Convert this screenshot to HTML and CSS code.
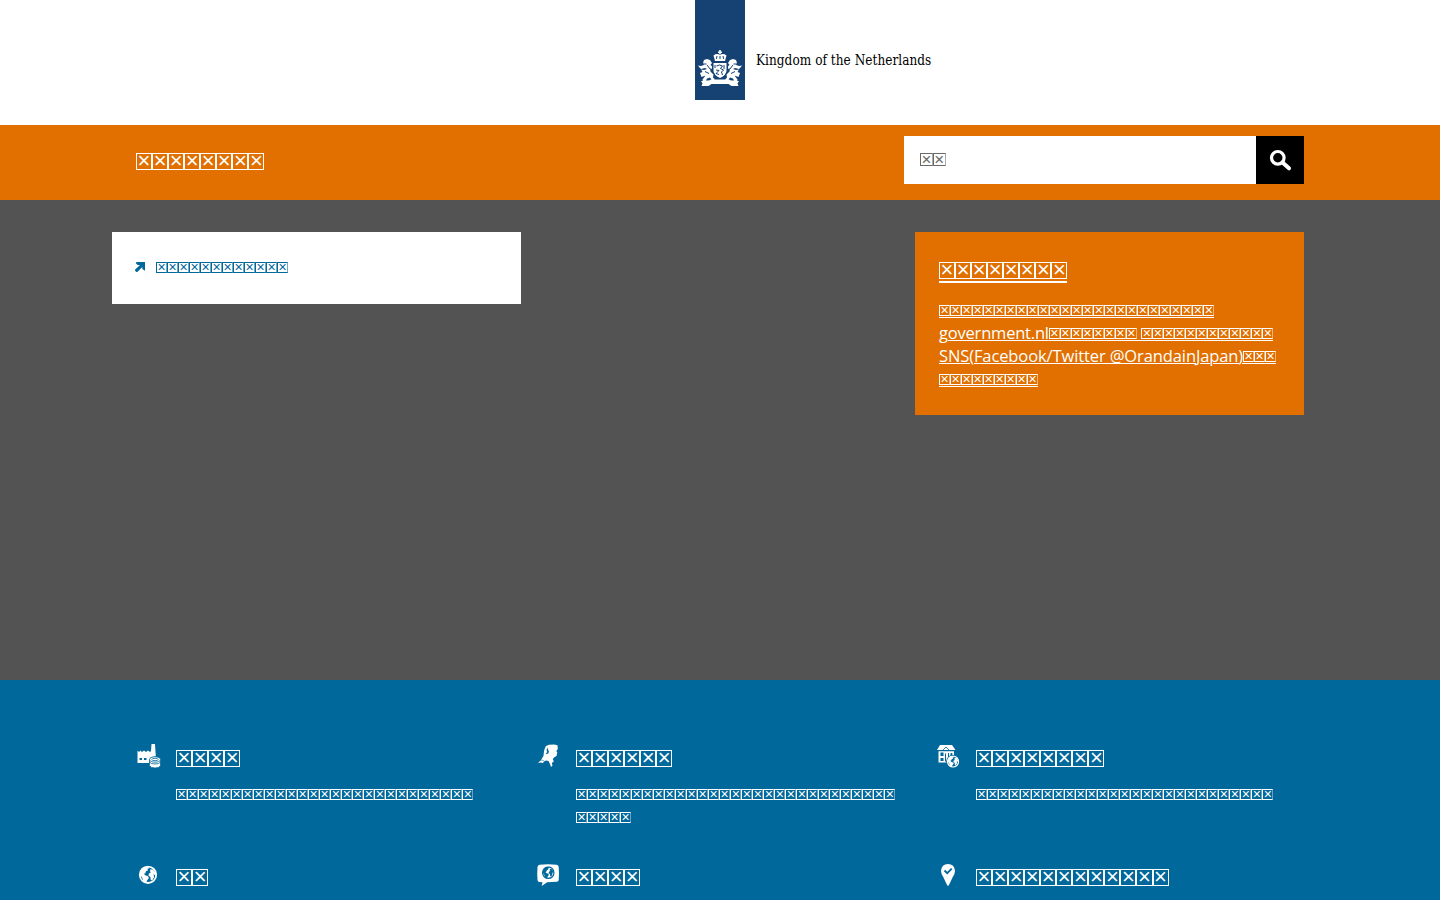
FILE: index.html
```html
<!DOCTYPE html>
<html lang="ja">
<head>
<meta charset="utf-8">
<title>Kingdom of the Netherlands</title>
<link rel="stylesheet" href="styles.css">
</head>
<body>
<svg class="defs" aria-hidden="true">
  <symbol id="globe" viewBox="0 0 20 20">
    <circle cx="10" cy="10" r="8.800" fill="none" stroke="currentColor" stroke-width="2"/>
    <path fill="currentColor" d="M2 5 5 2 10 1l1.500 2-2 .5.5 1.500-2.200 1.200L7 8.500l-1.500.3L7 10.500l3 1 1 2-2 2.500L8 19l-3-1.500-1-4L1.500 10ZM12.500 4l3 .5 3 4-1 2-1.500-1 .5 3-2 3.500-1.500-.5-.5-3.500-2-1 .5-2.500 2-1-.8-1Z"/>
  </symbol>
</svg>
<header class="brand">
  <div class="ribbon">
    <svg class="arms" viewBox="0 0 44 37">
      <g fill="#fff">
        <path d="M21.200 0h1.600v1.500H24V3h-1.200v1h-1.600V3H20V1.500h1.200Z"/>
        <path d="M15.500 5.500q3-2.500 6.500-.8 3.500-1.700 6.500.8L27 11H17Z"/>
        <path d="M15.500 13h13v7.500q0 5-6.500 7.500-6.500-2.500-6.500-7.500Z"/>
        <path id="lion" d="M6 10l3-1 3 1 2 3-1.500 2 2.500 2v2l-3-.5.5 3 3 3-.5 3 2 2-3 1-2-3-3 1-1 2h3v1.500H5l-.5-2.500 3-4-4 1.500L2 23l2.500-1L3 19.500l3 .5 3-1-2-1-4 1-1.500-1.500L0 15.500l3 .5 3-1-1-2Z"/>
        <use href="#lion" transform="matrix(-1 0 0 1 44 0)"/>
        <path d="M3 31h7l3-1.500h18l3 1.500h7l-1.500 2.500 1 2.500h-7l-3-2H13.500l-3 2h-7l1-2.500Z"/>
      </g>
      <g fill="none" stroke="#154273">
        <path stroke-width="1" d="M18.300 9l.7-3M22 9V6M25.700 9l-.7-3M4.500 14h4M39.500 14h-4M7 21.500l4 2M37 21.500l-4 2M9 15l3 4M35 15l-3 4M14.500 12v9M29.500 12v9M15 22l3 5M29 22l-3 5"/>
        <path stroke-width="1" d="M18.500 16l3-1 3 1-2 2.500 3 1.500-2 2 1 3M18 20l3 .5-3 3 3 1M26 15v4M17 15v3"/>
      </g>
    </svg>
  </div>
  <span class="brand-name">Kingdom of the Netherlands</span>
</header>
<nav class="bar">
  <div class="wrap bar-row">
    <a class="title" data-boxes>☒☒☒☒☒☒☒☒</a>
    <form class="search">
      <div class="field" data-boxes>☒☒</div>
      <button type="button" aria-label="search"><svg viewBox="0 0 24 24"><circle cx="9.800" cy="9.800" r="6.300" fill="none" stroke="#fff" stroke-width="3.200"/><path d="M14.500 14.500 21 20.300" stroke="#fff" stroke-width="4" stroke-linecap="round"/></svg></button>
    </form>
  </div>
</nav>
<main>
  <div class="wrap cards">
    <section class="link-card">
      <svg class="arrow" viewBox="0 0 10 10"><path fill="currentColor" d="M1.300 0H10v8.800L7.300 7V4.900L2.300 10H1.500L0 8.700V7.800L5 2.900H2.700L1 1.500Z"/></svg>
      <a data-boxes>☒☒☒☒☒☒☒☒☒☒☒☒</a>
    </section>
    <aside class="notice">
      <h2 class="lined" data-boxes>☒☒☒☒☒☒☒☒</h2>
      <p class="lined" data-boxes>☒☒☒☒☒☒☒☒☒☒☒☒☒☒☒☒☒☒☒☒☒☒☒☒☒<br><span class="gov">government.nl</span>☒☒☒☒☒☒☒☒ ☒☒☒☒☒☒☒☒☒☒☒☒<br><span class="sns">SNS(Facebook/Twitter @OrandainJapan)</span>☒☒☒<br>☒☒☒☒☒☒☒☒☒</p>
    </aside>
  </div>
</main>
<footer>
  <div class="wrap topics">
    <article>
      <svg viewBox="0 0 24 24"><path fill="currentColor" d="M.5 6.500 2 8l1.500-1.500L5 8l2-1.500L9 8l2-1.500L13 8l1-1L14.500 0h3.500l.8 12.500q-6 0-6.300 3V19H.5Z"/><path d="M2.500 15h2.500M7 15h2.500" stroke="#01689b" stroke-width="1.800"/><g fill="currentColor" stroke="#01689b" stroke-width=".8"><path d="M12.500 15v6.500q1 2.500 5.500 2.500t5.500-2.500V15"/><path fill="none" d="M12.500 18q1 2 5.500 2t5.500-2"/><ellipse cx="18" cy="15.500" rx="5.500" ry="2.700"/><ellipse cx="18" cy="15.500" rx="3.200" ry="1.200"/></g></svg>
      <div><h2 data-boxes>☒☒☒☒</h2><p data-boxes>☒☒☒☒☒☒☒☒☒☒☒☒☒☒☒☒☒☒☒☒☒☒☒☒☒☒☒</p></div>
    </article>
    <article>
      <svg viewBox="0 0 24 24"><path fill="currentColor" d="M9 2l3-1.200 5-.3 3.500.8.300 3.700-1.500 2 1 1.500-.8 3.500-2.500 1.500-1.200 1.500 1 2.500-2 1.500.7 2.500-1.500 1.500-1-3-1.500-3-2.500-.5-2 1-1 1.500-2-.5L1 19l3-3 1.500-2.500L6.500 12l.5-5 1-3Z"/><path d="M10.500 3.500l-1 2.500.7 2-1.700 2 2.500-.3 1-2-.8-1.700" fill="#01689b"/><path d="M2 16.500l3-.5 2 1" stroke="#01689b" stroke-width=".6" fill="none"/></svg>
      <div><h2 data-boxes>☒☒☒☒☒☒</h2><p data-boxes>☒☒☒☒☒☒☒☒☒☒☒☒☒☒☒☒☒☒☒☒☒☒☒☒☒☒☒☒☒<br>☒☒☒☒☒</p></div>
    </article>
    <article>
      <svg viewBox="0 0 24 24"><path fill="currentColor" d="M3 1h12l3.500 5H0ZM1.500 7.300h15.500v5.200L11 15v3.500H1.500Z"/><path fill="#01689b" d="M3.500 8.500h3v3.500h-3zM3.500 14h3v3h-3zM8 9.500h1v8H8zM11 9h1v4h-1zM13.500 9h1.800v3h-1.800z"/><path d="M5.500 6.500 9 3l3.500 3.500" fill="none" stroke="#01689b" stroke-width=".8"/><circle cx="16" cy="17.500" r="6.800" fill="#01689b"/><use href="#globe" x="9.800" y="11.300" width="12.500" height="12.500"/></svg>
      <div><h2 data-boxes>☒☒☒☒☒☒☒☒</h2><p data-boxes>☒☒☒☒☒☒☒☒☒☒☒☒☒☒☒☒☒☒☒☒☒☒☒☒☒☒☒</p></div>
    </article>
    <article>
      <svg viewBox="0 0 24 24"><use href="#globe" x="1.700" y="2.500" width="18.600" height="18.600"/></svg>
      <div><h2 data-boxes>☒☒</h2></div>
    </article>
    <article>
      <svg viewBox="0 0 24 24"><path fill="currentColor" d="M2.500 1.800q8.500-1 17 0 2 .2 2.200 2.200.5 6.500 0 13-.2 1.700-2 1.800l-9.500.5-5.500 3.700.8-3.700-3.200-.3q-1.600-.2-1.800-2-.5-6.500 0-13 .2-2 2-2.200Z"/><g color="#01689b"><use href="#globe" x="4.800" y="3.200" width="13" height="13"/></g></svg>
      <div><h2 data-boxes>☒☒☒☒</h2></div>
    </article>
    <article>
      <svg viewBox="0 0 24 24"><path fill="currentColor" d="M11 1q6.500.2 7 7 0 3-2.500 6.500L12.700 20.500 11.500 22.800h-1L9.300 20.500 6.500 14.500Q4 11 4 8 4.500 1.200 11 1Z"/><path d="M7.500 7.500l2.700 2.700 4.500-4.500" fill="none" stroke="#01689b" stroke-width="1.800"/></svg>
      <div><h2 data-boxes>☒☒☒☒☒☒☒☒☒☒☒☒</h2></div>
    </article>
  </div>
</footer>
<script src="boxes.js"></script>
</body>
</html>
```
FILE: styles.css
```css
* { box-sizing: border-box; }
body { margin: 0; height: 900px; overflow: hidden; background: #535353; font-family: "Open Sans", sans-serif; font-size: 16.5px; line-height: 23px; }
h2, p { margin: 0; font-weight: 400; }
.defs { display: none; }
.wrap { width: 1216px; margin: 0 auto; }

.brand { height: 125px; padding-left: 695px; display: flex; background: #fff; }
.ribbon { width: 50px; height: 100px; padding: 50px 3px 0; background: #154273; }
.arms { display: block; width: 44px; height: 37px; }
.brand-name { margin: 49px 0 0 11px; font: 14px/22px "DejaVu Serif Condensed", "DejaVu Serif", serif; font-stretch: condensed; letter-spacing: .05px; color: #000; white-space: nowrap; transform: scaleX(.96); transform-origin: left; }

.bar { height: 75px; background: #e17000; color: #fff; }
.bar-row { display: flex; justify-content: space-between; padding: 11px 24px 0; }
.title { padding-top: 17px; font-size: 17px; line-height: 17px; --w: 16.06px; --h: 17px; --x: 22px; --lift: 1px; --edge: #fff; }
.search { display: flex; width: 400px; height: 48px; }
.field { width: 352px; padding: 17px 16px; line-height: 13px; background: #fff; color: #696969; --w: 12.9px; --h: 13px; --x: 17px; --edge: #aaa; }
.search button { width: 48px; padding: 12px; border: 0; background: #000; }
.search button svg { display: block; width: 24px; height: 24px; }

main { height: 480px; padding-top: 32px; }
.cards { display: flex; justify-content: space-between; align-items: flex-start; padding-right: 24px; }
.link-card { display: flex; width: 409px; height: 72px; padding: 30px 23px; background: #fff; color: #01689b; --edge: #74abc6; }
.link-card a { display: flex; }
.arrow { width: 10px; height: 10px; margin-right: 11px; }
.notice { width: 389px; height: 183px; padding: 25px 24px 0; background: #e17000; color: #fff; --edge: #efb37b; }
.notice h2 { height: 41px; padding-top: 4px; --drop: 4px; }
.notice p { white-space: nowrap; text-decoration: underline; text-decoration-thickness: 1px; text-underline-offset: 1px; }
.gov { letter-spacing: -.2px; }
.sns { letter-spacing: -.11px; }

footer { height: 220px; background: #01689b; color: #fff; --edge: #66a4c3; }
.topics { display: grid; grid-template-columns: 400px 400px 400px; grid-template-rows: 119px 80px; padding: 63px 24px 0; }
.topics article { display: flex; gap: 16px; }
.topics article > svg { flex: none; width: 24px; height: 24px; margin: 1px -1px 0 1px; }
.topics h2 { height: 39px; padding-top: 6px; }
.topics p { white-space: nowrap; }

/* One bordered cell for each missing-glyph character */
.cell { display: inline-flex; contain: layout; position: relative; justify-content: center; width: var(--w, 11.03px); height: var(--h, 11px); vertical-align: baseline; border: 1px solid; border-right-color: var(--edge); font: var(--x, 14px)/calc(var(--h, 11px) - 2px - var(--lift, 0px)) "Liberation Sans", sans-serif; text-decoration: none; }
h2 { font-size: 17px; --w: 16.06px; --h: 17px; --x: 22px; --lift: 1px; --edge: #fff; --u: 2px; }
.lined .cell::after { content: ""; position: absolute; left: -1px; right: -1px; bottom: calc(-1px - var(--drop, 2px)); height: var(--u, 1px); background: currentColor; }
```
FILE: boxes.js
```js
document.querySelectorAll('[data-boxes]').forEach(el => {
  for (const node of [...el.childNodes]) {
    if (node.nodeType !== 3) continue;
    const out = document.createDocumentFragment();
    for (const ch of node.data) {
      if (ch === '☒') {
        const cell = document.createElement('span');
        cell.className = 'cell';
        cell.textContent = '×';
        out.append(cell);
      } else out.append(ch);
    }
    node.replaceWith(out);
  }
});
```
